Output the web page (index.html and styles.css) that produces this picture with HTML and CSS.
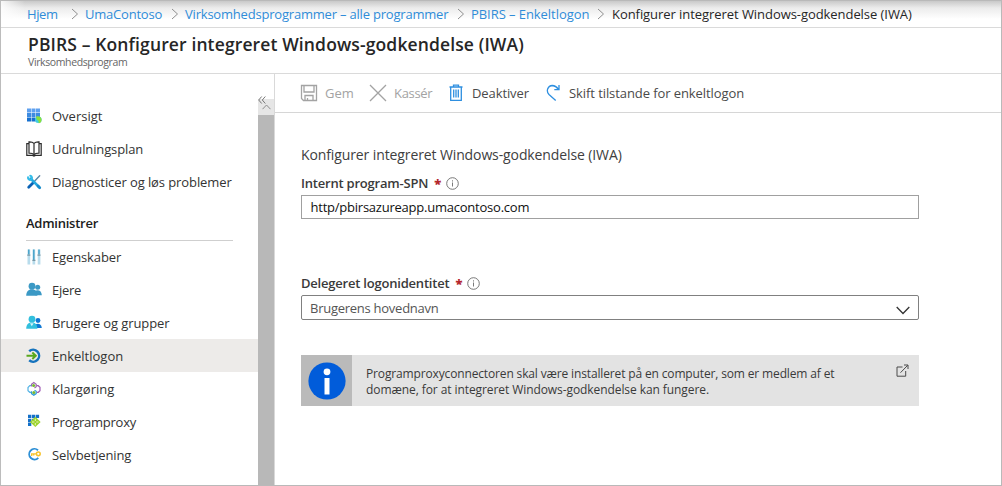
FILE: index.html
```html
<!DOCTYPE html>
<html lang="da">
<head>
<meta charset="utf-8">
<title>PBIRS – Konfigurer integreret Windows-godkendelse (IWA)</title>
<link rel="stylesheet" href="styles.css">
</head>
<body>
<div class="portal">
  <nav class="crumbs">
    <a class="crumb c-home">Hjem</a>
    <svg class="sep" viewBox="0 0 8 12"><path d="M1 1l5.5 5L1 11"/></svg>
    <a class="crumb c-org">UmaContoso</a>
    <svg class="sep" viewBox="0 0 8 12"><path d="M1 1l5.5 5L1 11"/></svg>
    <a class="crumb c-apps">Virksomhedsprogrammer – alle programmer</a>
    <svg class="sep" viewBox="0 0 8 12"><path d="M1 1l5.5 5L1 11"/></svg>
    <a class="crumb c-app">PBIRS – Enkeltlogon</a>
    <svg class="sep" viewBox="0 0 8 12"><path d="M1 1l5.5 5L1 11"/></svg>
    <span class="crumb c-current">Konfigurer integreret Windows-godkendelse (IWA)</span>
  </nav>
  <header class="heading">
    <h1 class="title">PBIRS – Konfigurer integreret Windows-godkendelse (IWA)</h1>
    <p class="subtitle">Virksomhedsprogram</p>
  </header>
  <div class="body">
    <aside class="sidebar">
      <ul class="menu menu-top">
        <li class="item"><svg class="icon" viewBox="0 0 16 16"><g fill="#5ea0ef"><path d="M1 .5h4v4H1zM5.500.5h4v4h-4zM10 .5h4v4h-4z"/></g><g fill="#3d8be0"><path d="M1 5h4v4H1zM5.500 5h4v4h-4zM10 5h4v4h-4z"/></g><path fill="#1670cf" d="M1 9.500h4v4H1zM5.500 9.500h4v4h-4z"/><circle cx="12.300" cy="11.800" r="3.300" fill="#3fcbe0"/><path d="M10 8.800c2-1 4.500-.3 5.300 1.700.8 2.500-.6 4.300-2.500 4.700-.6-1.200.3-2.300-.7-2.700-1.300-.4-1.900-1.700-2.100-3.700z" fill="#8be03c"/></svg><span class="label l-oversigt">Oversigt</span></li>
        <li class="item"><svg class="icon" viewBox="0 0 16 16" fill="none" stroke="#2b2b2b" stroke-width="1.200"><path d="M8 2.300C6.700 1 5 .7 3 .8v11.400c2-.1 3.700.2 5 1.500 1.300-1.300 3-1.600 5-1.500V.8c-2-.1-3.700.2-5 1.500zM8 2.300v12.200M3 2.600H.8v11.800h5.700L8 15l1.500-.6h5.700V2.600H13"/></svg><span class="label l-plan">Udrulningsplan</span></li>
        <li class="item"><svg class="icon" viewBox="0 0 16 16" fill="none" stroke-linecap="round"><path d="M13.700 1.700L8.500 7.300" stroke="#5b86a5" stroke-width="1.400"/><path d="M7.500 8.500L2.700 13.300" stroke="#0a62b5" stroke-width="2.800"/><path d="M4.500 4.500L13 13" stroke="#26a9df" stroke-width="2.500"/><path d="M2 3.200c-.4 2.100 1.700 3.300 3.200 2.400 1.400-1 1.100-3.500-1-3.900" stroke="#32bce8" stroke-width="1.900"/><path d="M12 12l1.700 1.700" stroke="#178bcb" stroke-width="2.800"/></svg><span class="label l-diag">Diagnosticer og løs problemer</span></li>
      </ul>
      <h2 class="section">Administrer</h2>
      <ul class="menu menu-manage">
        <li class="item"><svg class="icon" viewBox="0 0 16 16"><path fill="#b8dcec" d="M1.500.5h2.700v15H1.500zM6.500.5h2.700v15H6.500zM11.700.5h2.700v15h-2.700z"/><path stroke="#3a9cc5" stroke-width="1.300" d="M2.800.5v5M7.800.5v11M13 .5v5"/><path fill="#7b98a5" d="M1.300 5.500h3v1.300h-3zM6.400 10.800h3v1.300h-3zM11.500 5.500h3v1.300h-3z"/></svg><span class="label l-egen">Egenskaber</span></li>
        <li class="item"><svg class="icon" viewBox="0 0 16 16" fill="#3b99c5"><circle cx="11.700" cy="5.200" r="2.500"/><path d="M9 13.200V9c2-1.500 6.600-1 6.800 4.200z"/><circle cx="6" cy="4.200" r="3.400"/><path d="M.2 13.800C.3 9.500 2.500 7.300 5.800 7.300s5.500 2 5.600 6.500z"/></svg><span class="label l-ejere">Ejere</span></li>
        <li class="item"><svg class="icon" viewBox="0 0 16 16"><g fill="#0f78d4"><circle cx="12" cy="5.500" r="2.400"/><path d="M9.500 13V9.500c2-1.500 6-1 6.300 3.500z"/></g><g fill="#32bfdd"><circle cx="6" cy="4.200" r="3.400"/><path d="M.2 13.800C.3 9.500 2.500 7.600 5.800 7.600s5.500 1.900 5.600 6.200z"/></g><path fill="#d9f6fa" d="M4 8.300h3.600l-1.800 3z"/></svg><span class="label l-bruger">Brugere og grupper</span></li>
        <li class="item selected"><svg class="icon" viewBox="0 0 16 16" fill="none"><path d="M3.200 3.200A6 6 0 1 1 3.200 12.300" stroke="#1673bd" stroke-width="2.500"/><path d="M.5 7.800h9M6.300 4.500l3.500 3.300-3.500 3.300" stroke="#5aa81e" stroke-width="2"/></svg><span class="label l-enkelt">Enkeltlogon</span></li>
        <li class="item"><svg class="icon" viewBox="0 0 16 16" fill="none" stroke-width="1.200"><path d="M5 4.700H3.800L2 6.500v3.200L3.800 11.300H5" stroke="#54b3e4"/><path d="M10.500 4.700h1.700L14 6.300v3.400l-1.800 1.600h-1.500" stroke="#a05cb5"/><path d="M5.500 5.500V3.300l2.300-1.700 2.400 1.700v2.500L8.500 7" stroke="#9b68ae"/><path d="M5.500 10.300v2.300l2.300 1.700 2.400-1.700v-2.300L8.500 9.300" stroke="#2f9bd6"/><circle cx="7.600" cy="4.500" r="1.500" fill="#77b82f"/><circle cx="7.800" cy="11.600" r="1.500" fill="#77b82f"/></svg><span class="label l-klar">Klargøring</span></li>
        <li class="item"><svg class="icon" viewBox="0 0 16 16"><path fill="#1470c8" d="M2 .8h3.300v3.300H2zM5.900.8h3.300v3.300H5.900zM9.800.8h3.300v3.300H9.800zM2 4.700h3.300V8H2zM5.900 4.700h3.300V8H5.900zM2 8.600h3.300v3.300H2z"/><path fill="#9bd22b" d="M9.300 2.800l5.300 5.200-5.300 5L4 8z"/><path d="M9.300 4.800v6.500M6 8h6.500" stroke="#e6f5bd"/><path d="M8.300 7h2v2h-2z" fill="#9bd22b"/></svg><span class="label l-proxy">Programproxy</span></li>
        <li class="item"><svg class="icon" viewBox="0 0 16 16" fill="none"><path d="M12 3.200A5.300 5.300 0 1 0 12.300 10.900" stroke="#2d8fd5" stroke-width="1.900"/><circle cx="12.300" cy="6.800" r="1.900" stroke="#f6c32c" stroke-width="1.500"/><path d="M10.300 6.900H5M5.700 6.900v2M7.700 6.900v1.700" stroke="#f6c32c" stroke-width="1.400"/></svg><span class="label l-selv">Selvbetjening</span></li>
      </ul>
      <div class="scrollbar">
        <div class="scroll-up"><svg width="9" height="6" viewBox="0 0 9 6"><path d="M.5 5.200l4-4.200 4 4.200"/></svg></div>
        <div class="thumb"></div>
      </div>
      <svg class="collapse" viewBox="0 0 8 8"><path d="M3.700.5L.7 4l3 3.500M7.300.5l-3 3.500 3 3.500"/></svg>
    </aside>
    <main class="main">
      <div class="toolbar">
        <button class="tool disabled t-save"><svg width="18" height="18" viewBox="0 0 18 18"><path d="M1.500 1.500h15v15H3.500l-2-2zM4 1.500v6.500h10V1.500M5 16.500v-5h8v5M7.500 16.500V14"/></svg><span>Gem</span></button>
        <button class="tool disabled t-discard"><svg width="18" height="18" viewBox="0 0 18 18"><path d="M1 1l16 16M17 1L1 17"/></svg><span>Kassér</span></button>
        <button class="tool t-off"><svg width="14" height="18" viewBox="0 0 14 18"><path d="M.5 3h13M4.500 3V1.200h5V3M1.700 3v13.300h10.600V3M4.700 5.500v8M7 5.500v8M9.300 5.500v8"/></svg><span>Deaktiver</span></button>
        <button class="tool t-switch"><svg width="15" height="18" viewBox="0 0 15 18"><path d="M9.700 16.500L3 10.500C-.3 7 1.800 1.700 6.300 1.500c2.800 0 4.500 1.500 6.300 3.800M13 1v4.700H8.300"/></svg><span>Skift tilstande for enkeltlogon</span></button>
      </div>
      <form class="form">
        <h3 class="intro">Konfigurer integreret Windows-godkendelse (IWA)</h3>
        <div class="caption"><span>Internt program-SPN</span><b class="req">*</b><svg class="hint" viewBox="0 0 13 13"><circle cx="6.500" cy="6.500" r="5.800"/><path d="M6.500 5.500v4M6.500 3.300v1.200"/></svg></div>
        <div class="field spn"><span>http/pbirsazureapp.umacontoso.com</span></div>
        <div class="caption second"><span>Delegeret logonidentitet</span><b class="req">*</b><svg class="hint" viewBox="0 0 13 13"><circle cx="6.500" cy="6.500" r="5.800"/><path d="M6.500 5.500v4M6.500 3.300v1.200"/></svg></div>
        <div class="field select"><span>Brugerens hovednavn</span><svg class="chevron" viewBox="0 0 14 9"><path d="M.7 1L7 7.500 13.300 1"/></svg></div>
        <div class="notice">
          <div class="badge"><svg width="38" height="38" viewBox="0 0 38 38"><circle cx="19" cy="19" r="18.600" fill="#015cda"/><circle cx="19" cy="9.800" r="3.400" fill="#fff"/><path d="M16.500 16h5v16.500h-5z" fill="#fff"/></svg></div>
          <p class="message"><span class="m1">Programproxyconnectoren skal være installeret på en computer, som er medlem af et</span><br><span class="m2">domæne, for at integreret Windows-godkendelse kan fungere.</span></p>
          <svg class="external" viewBox="0 0 13 13"><path d="M6.500 3H1v9.200h8.700V7M4.500 8.700L11.700 1.300M8 1h4v4"/></svg>
        </div>
      </form>
    </main>
  </div>
</div>
</body>
</html>
```
FILE: styles.css
```css
* { box-sizing: border-box; margin: 0; padding: 0; }
body { font-family: "Open Sans", "Noto Sans", sans-serif; font-size: 13px; color: #333; background: #fff; }
.portal { width: 1002px; height: 486px; border: 1px solid #b9b9b9; border-left-color: #bcbcbc; display: flex; flex-direction: column; overflow: hidden; white-space: nowrap; }

.crumbs { height: 27px; flex: none; display: flex; align-items: center; padding-left: 26px; border-bottom: 1px solid #dadada; background: linear-gradient(90deg, rgba(255,255,255,.85), rgba(255,255,255,0) 24px), linear-gradient(#c9c9c9, #ececec 7px, #fff 18px); }
.crumb { color: #2f8cd8; flex: none; }
.crumb.c-current { color: #262626; }
.c-home { width: 44px; letter-spacing: -.4px; }
.c-org { width: 86px; margin-left: 6px; letter-spacing: -.22px; }
.c-apps { width: 272px; margin-left: 6px; letter-spacing: -.2px; }
.c-app { width: 126px; margin-left: 6px; letter-spacing: -.06px; }
.c-current { margin-left: 7px; letter-spacing: -.06px; }
.sep { width: 8px; height: 12px; flex: none; fill: none; stroke: #8f8f8f; }

.heading { height: 46px; flex: none; padding: 4px 0 0 27px; border-bottom: 1px solid #dadada; }
.title { font-size: 17.500px; line-height: 25px; font-weight: 600; color: #262626; letter-spacing: .125px; }
.subtitle { font-size: 10.500px; line-height: 11px; color: #666; letter-spacing: -.38px; }

.body { flex: 1; display: flex; min-height: 0; }
.sidebar { width: 274px; flex: none; position: relative; border-right: 1px solid #d9d9d9; padding-top: 25px; }
.menu { list-style: none; width: 257px; }
.menu-manage { margin-top: -1px; }
.item { height: 33px; display: flex; align-items: center; padding-left: 25px; gap: 10px; }
.item.selected { background: #edebe9; }
.icon { width: 16px; height: 16px; flex: none; }
.l-plan, .l-egen, .l-selv { letter-spacing: -.13px; }
.l-diag, .l-bruger { letter-spacing: -.09px; }
.l-ejere, .l-proxy { letter-spacing: -.25px; }
.section { margin: 0 41px 0 25px; height: 43px; border-bottom: 1px solid #cfcfcf; font-size: 13px; line-height: 50px; font-weight: 600; color: #1c1c1c; letter-spacing: -.25px; }
.scrollbar { position: absolute; right: 0; top: 25px; bottom: 0; width: 16px; display: flex; flex-direction: column; }
.scroll-up { height: 16px; background: #e6e6e6; display: flex; justify-content: center; align-items: center; }
.scroll-up svg { fill: none; stroke: #8c8c8c; }
.thumb { flex: 1; background: #b8b8b8; }
.collapse { position: absolute; left: 257px; top: 22px; width: 8px; height: 8px; fill: none; stroke: #777; }

.main { flex: 1; min-width: 0; }
.toolbar { height: 39px; border-bottom: 1px solid #d6d6d6; display: flex; align-items: center; padding-left: 25px; }
.tool { border: 0; background: none; font: inherit; color: #4a4a4a; display: flex; align-items: center; flex: none; }
.tool svg { fill: none; stroke: #2e8fe0; stroke-width: 1.300; flex: none; }
.tool.disabled { color: #a3a3a3; }
.tool.disabled svg { stroke: #a3a3a3; }
.t-save { width: 69px; gap: 7px; }
.t-discard { width: 80px; gap: 7px; letter-spacing: -.3px; }
.t-off { width: 97px; gap: 9px; letter-spacing: -.1px; }
.t-switch { gap: 8px; letter-spacing: -.08px; }

.form { padding: 31px 0 0 26px; width: 644px; }
.intro { font-size: 14px; line-height: 22px; font-weight: 400; color: #404040; letter-spacing: -.11px; }
.caption { display: flex; align-items: center; height: 20px; margin: 7px 0 2px; font-weight: 600; color: #3a3a3a; letter-spacing: -.21px; }
.caption.second { margin-top: 54px; }
.req { color: #b3262c; margin: 0 5px 0 6px; }
.hint { width: 13px; height: 13px; fill: none; stroke: #6a6a6a; stroke-width: .9; }
.field { height: 24px; border: 1px solid #a0a0a0; display: flex; align-items: center; padding-left: 8.5px; color: #111; letter-spacing: -.23px; }
.select { height: 25px; border-color: #808080; border-radius: 2px; justify-content: space-between; padding: 0 8px; color: #555; letter-spacing: -.26px; }
.chevron { width: 14px; height: 9px; margin-top: 6px; fill: none; stroke: #333; stroke-width: 1.300; }
.notice { margin-top: 35px; height: 51px; background: #e3e3e3; display: flex; }
.badge { width: 51px; background: #bababa; display: flex; align-items: center; justify-content: center; }
.message { flex: 1; padding: 11px 0 0 14px; font-size: 12px; line-height: 16px; color: #3a3a3a; }
.m1 { letter-spacing: -.145px; }
.m2 { letter-spacing: -.08px; }
.external { width: 13px; height: 13px; margin: 9px 10px 0 0; fill: none; stroke: #4a4a4a; }
```
